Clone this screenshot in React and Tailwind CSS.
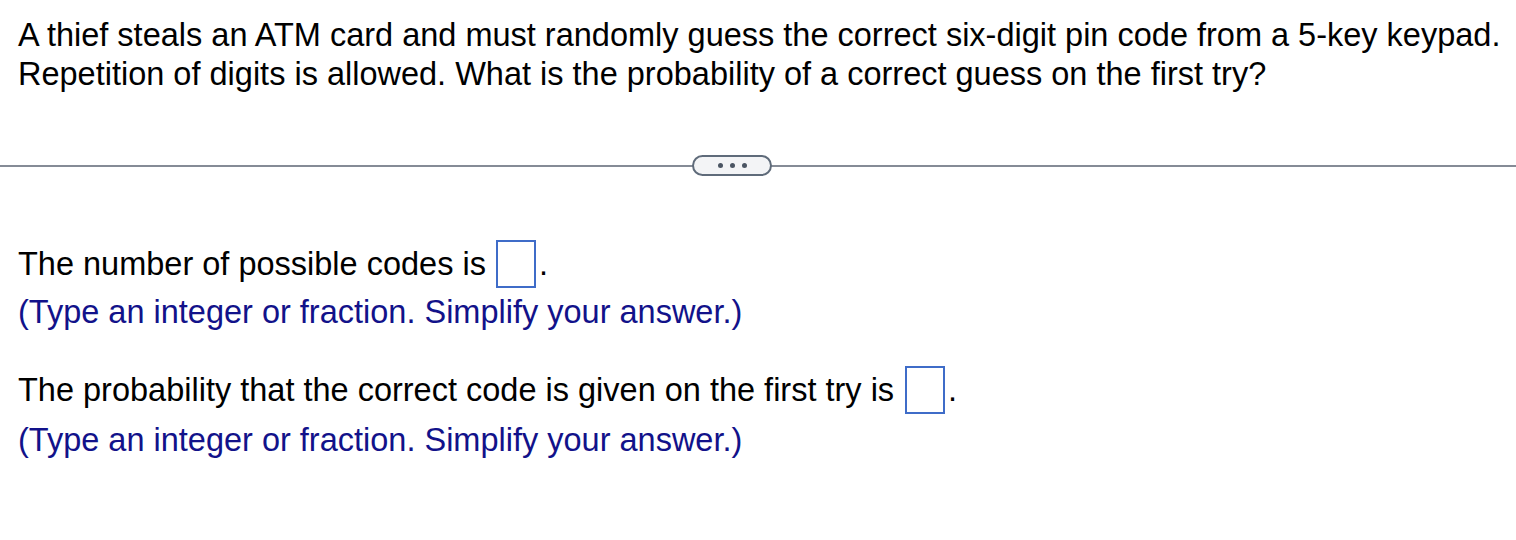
export default function App() {
  const font = { fontFamily: '"Liberation Sans", Arial, sans-serif' };
  return (
    <div className="w-[1516px] h-[540px] bg-white text-black" style={font}>
      <div className="pl-[18px] pt-[16px] text-[32.5px] leading-[39px]">
        <p className="whitespace-nowrap">A thief steals an ATM card and must randomly guess the correct six-digit pin code from a 5-key keypad.</p>
        <p className="whitespace-nowrap">Repetition of digits is allowed. What is the probability of a correct guess on the first try?</p>
      </div>
      <div className="relative mt-[61px] h-[21px] flex items-center">
        <div className="w-full h-[2px] bg-[#858b96]" />
        <div className="absolute left-[692px] top-0 w-[80px] h-[21px] rounded-full border-2 border-[#5f6b7a] bg-[#f3f4f6] flex items-center justify-center gap-[7px]">
          <span className="w-[5px] h-[5px] rounded-full bg-[#4b5563]" />
          <span className="w-[5px] h-[5px] rounded-full bg-[#4b5563]" />
          <span className="w-[5px] h-[5px] rounded-full bg-[#4b5563]" />
        </div>
      </div>
      <div className="pl-[18px] pt-[64px] text-[32.5px]">
        <div className="flex items-center h-[48px] whitespace-nowrap">
          <span>The number of possible codes is</span>
          <span className="ml-[10px] w-[40px] h-[48px] border-2 border-[#3f6cc8]" />
          <span className="ml-[3px]">.</span>
        </div>
        <div className="h-[48px] leading-[48px] text-[#12128a] whitespace-nowrap">(Type an integer or fraction. Simplify your answer.)</div>
        <div className="mt-[30px] flex items-center h-[48px] whitespace-nowrap">
          <span>The probability that the correct code is given on the first try is</span>
          <span className="ml-[11px] w-[40px] h-[48px] border-2 border-[#3f6cc8]" />
          <span className="ml-[3px]">.</span>
        </div>
        <div className="mt-[2px] h-[48px] leading-[48px] text-[#12128a] whitespace-nowrap">(Type an integer or fraction. Simplify your answer.)</div>
      </div>
    </div>
  );
}
